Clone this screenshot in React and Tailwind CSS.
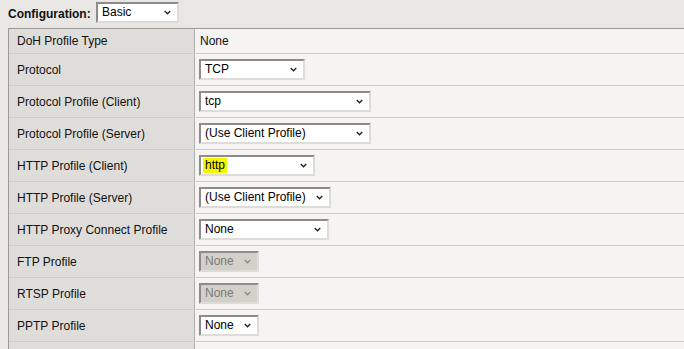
import React from "react";

function Chevron({ disabled }) {
  return (
    <svg width="7" height="5" viewBox="0 0 7 5" className="shrink-0">
      <path d="M0.7 1 L3.5 3.8 L6.3 1" fill="none" stroke={disabled ? "#8a8a8a" : "#222"} strokeWidth="1.3" />
    </svg>
  );
}

function Sel({ w, value, disabled, highlight }) {
  return (
    <div
      className={`flex items-center justify-between h-[21px] border-2 border-t-[#8c8c8c] border-l-[#8c8c8c] border-b-[#dedcd8] border-r-[#dedcd8] pl-[4px] pr-[6px] ${disabled ? "bg-[#d4d0c8] text-[#7a7a7a]" : "bg-white text-black"}`}
      style={{ width: w }}
    >
      <span className={highlight ? "bg-[#f5f500] px-[2px] -ml-[2px] leading-[15px]" : "leading-[15px]"}>{value}</span>
      <Chevron disabled={disabled} />
    </div>
  );
}

const rows = [
  { label: "Protocol", w: 106, value: "TCP" },
  { label: "Protocol Profile (Client)", w: 172, value: "tcp" },
  { label: "Protocol Profile (Server)", w: 172, value: "(Use Client Profile)" },
  { label: "HTTP Profile (Client)", w: 116, value: "http", highlight: true },
  { label: "HTTP Profile (Server)", w: 132, value: "(Use Client Profile)" },
  { label: "HTTP Proxy Connect Profile", w: 130, value: "None" },
  { label: "FTP Profile", w: 60, value: "None", disabled: true },
  { label: "RTSP Profile", w: 60, value: "None", disabled: true },
  { label: "PPTP Profile", w: 60, value: "None" },
];

export default function App() {
  return (
    <div className="w-[684px] h-[349px] overflow-hidden bg-[#e9e7e3] text-[12px] text-[#111] font-['Liberation_Sans',Arial,sans-serif]">
      <div className="flex items-center h-[28px] pl-[8px]">
        <span className="font-bold w-[88px]">Configuration:</span>
        <div className="-mt-[4px]">
          <Sel w={83} value="Basic" />
        </div>
      </div>
      <div className="ml-[8px] border-t border-l border-[#9c9a98]">
        <div className="flex h-[25px] border-b border-[#cfccc8]">
          <div className="w-[186px] shrink-0 bg-[#dfddd9] border-r border-[#b2b0ad] flex items-center pl-[8px]">DoH Profile Type</div>
          <div className="flex-1 bg-[#f5f4f2] flex items-center pl-[5px]">None</div>
        </div>
        {rows.map((r) => (
          <div key={r.label} className="flex h-[32px] border-b border-[#cfccc8]">
            <div className="w-[186px] shrink-0 bg-[#dfddd9] border-r border-[#b2b0ad] flex items-center pl-[8px]">{r.label}</div>
            <div className="flex-1 bg-[#f5f4f2] flex items-center pl-[4px]">
              <Sel w={r.w} value={r.value} disabled={r.disabled} highlight={r.highlight} />
            </div>
          </div>
        ))}
        <div className="flex h-[32px]">
          <div className="w-[186px] shrink-0 bg-[#dfddd9] border-r border-[#b2b0ad]" />
          <div className="flex-1 bg-[#f5f4f2]" />
        </div>
      </div>
    </div>
  );
}
